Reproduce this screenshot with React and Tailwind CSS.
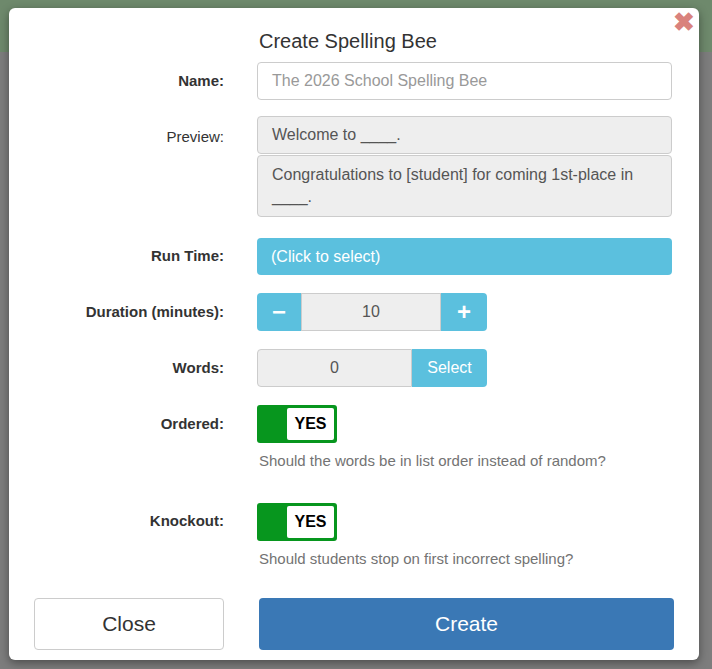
export default function App() {
  const label = "w-[248px] text-right pr-[33px] text-[15px] font-bold text-[#333]";
  return (
    <div className="relative w-[712px] h-[669px] bg-[#7d7d7d] overflow-hidden" style={{ fontFamily: "'Liberation Sans', Arial, sans-serif" }}>
      <div className="h-[52px] bg-[#6e896c]" />
      <div className="absolute left-[9px] top-[8px] w-[690px] h-[652px] bg-white rounded-[6px] shadow-[0_3px_10px_rgba(0,0,0,0.4)]">
        <button className="absolute right-[4px] top-[1px] text-[#d9827d] text-[26px] font-bold leading-none">✖</button>
        <div className="pl-[250px] pt-[21px] text-[20px] text-[#333] leading-[24px]">Create Spelling Bee</div>
        <div className="flex items-center mt-[9px]">
          <div className={label}>Name:</div>
          <div className="w-[415px] h-[38px] border border-[#ccc] rounded-[4px] px-[14px] flex items-center text-[16px] text-[#999]">The 2026 School Spelling Bee</div>
        </div>
        <div className="flex items-start mt-[16px]">
          <div className={`${label} font-normal pt-[10px]`}>Preview:</div>
          <div className="w-[415px] flex flex-col gap-[1px] text-[16px] text-[#555]">
            <div className="h-[38px] bg-[#eee] border border-[#ccc] rounded-[4px] px-[14px] flex items-center">Welcome to ____.</div>
            <div className="h-[62px] bg-[#eee] border border-[#ccc] rounded-[4px] px-[14px] pt-[8px] leading-[22px]">Congratulations to [student] for coming 1st-place in ____.</div>
          </div>
        </div>
        <div className="flex items-center mt-[21px]">
          <div className={label}>Run Time:</div>
          <div className="w-[415px] h-[37px] bg-[#5bc0de] rounded-[4px] px-[14px] flex items-center text-[16px] text-white">(Click to select)</div>
        </div>
        <div className="flex items-center mt-[18px]">
          <div className={label}>Duration (minutes):</div>
          <div className="flex h-[38px] w-[230px]">
            <div className="w-[44px] bg-[#5bc0de] rounded-l-[4px] flex items-center justify-center text-white text-[24px] font-bold">−</div>
            <div className="flex-1 bg-[#eee] border border-[#ccc] flex items-center justify-center text-[16px] text-[#555]">10</div>
            <div className="w-[46px] bg-[#5bc0de] rounded-r-[4px] flex items-center justify-center text-white text-[24px] font-bold">+</div>
          </div>
        </div>
        <div className="flex items-center mt-[18px]">
          <div className={label}>Words:</div>
          <div className="flex h-[38px] w-[230px]">
            <div className="w-[155px] bg-[#eee] border border-[#ccc] rounded-l-[4px] flex items-center justify-center text-[16px] text-[#555]">0</div>
            <div className="flex-1 bg-[#5bc0de] rounded-r-[4px] flex items-center justify-center text-white text-[16px]">Select</div>
          </div>
        </div>
        {[["Ordered:", "Should the words be in list order instead of random?"], ["Knockout:", "Should students stop on first incorrect spelling?"]].map(([l, d], i) => (
          <div key={l} className={i ? "mt-[30px]" : "mt-[18px]"}>
            <div className="flex items-center">
              <div className={label}>{l}</div>
              <div className="w-[80px] h-[38px] bg-[#07961e] rounded-[3px] p-[3px] pl-[30px]">
                <div className="h-full bg-white rounded-[2px] flex items-center justify-center text-[16px] font-bold text-black">YES</div>
              </div>
            </div>
            <div className="pl-[250px] mt-[7px] text-[15px] text-[#737373]">{d}</div>
          </div>
        ))}
        <div className="flex mt-[28px] pl-[25px] gap-[35px]">
          <button className="w-[190px] h-[52px] border border-[#ccc] rounded-[4px] text-[21px] text-[#333]">Close</button>
          <button className="w-[415px] h-[52px] bg-[#3a78b5] rounded-[4px] text-[21px] text-white">Create</button>
        </div>
      </div>
    </div>
  );
}
